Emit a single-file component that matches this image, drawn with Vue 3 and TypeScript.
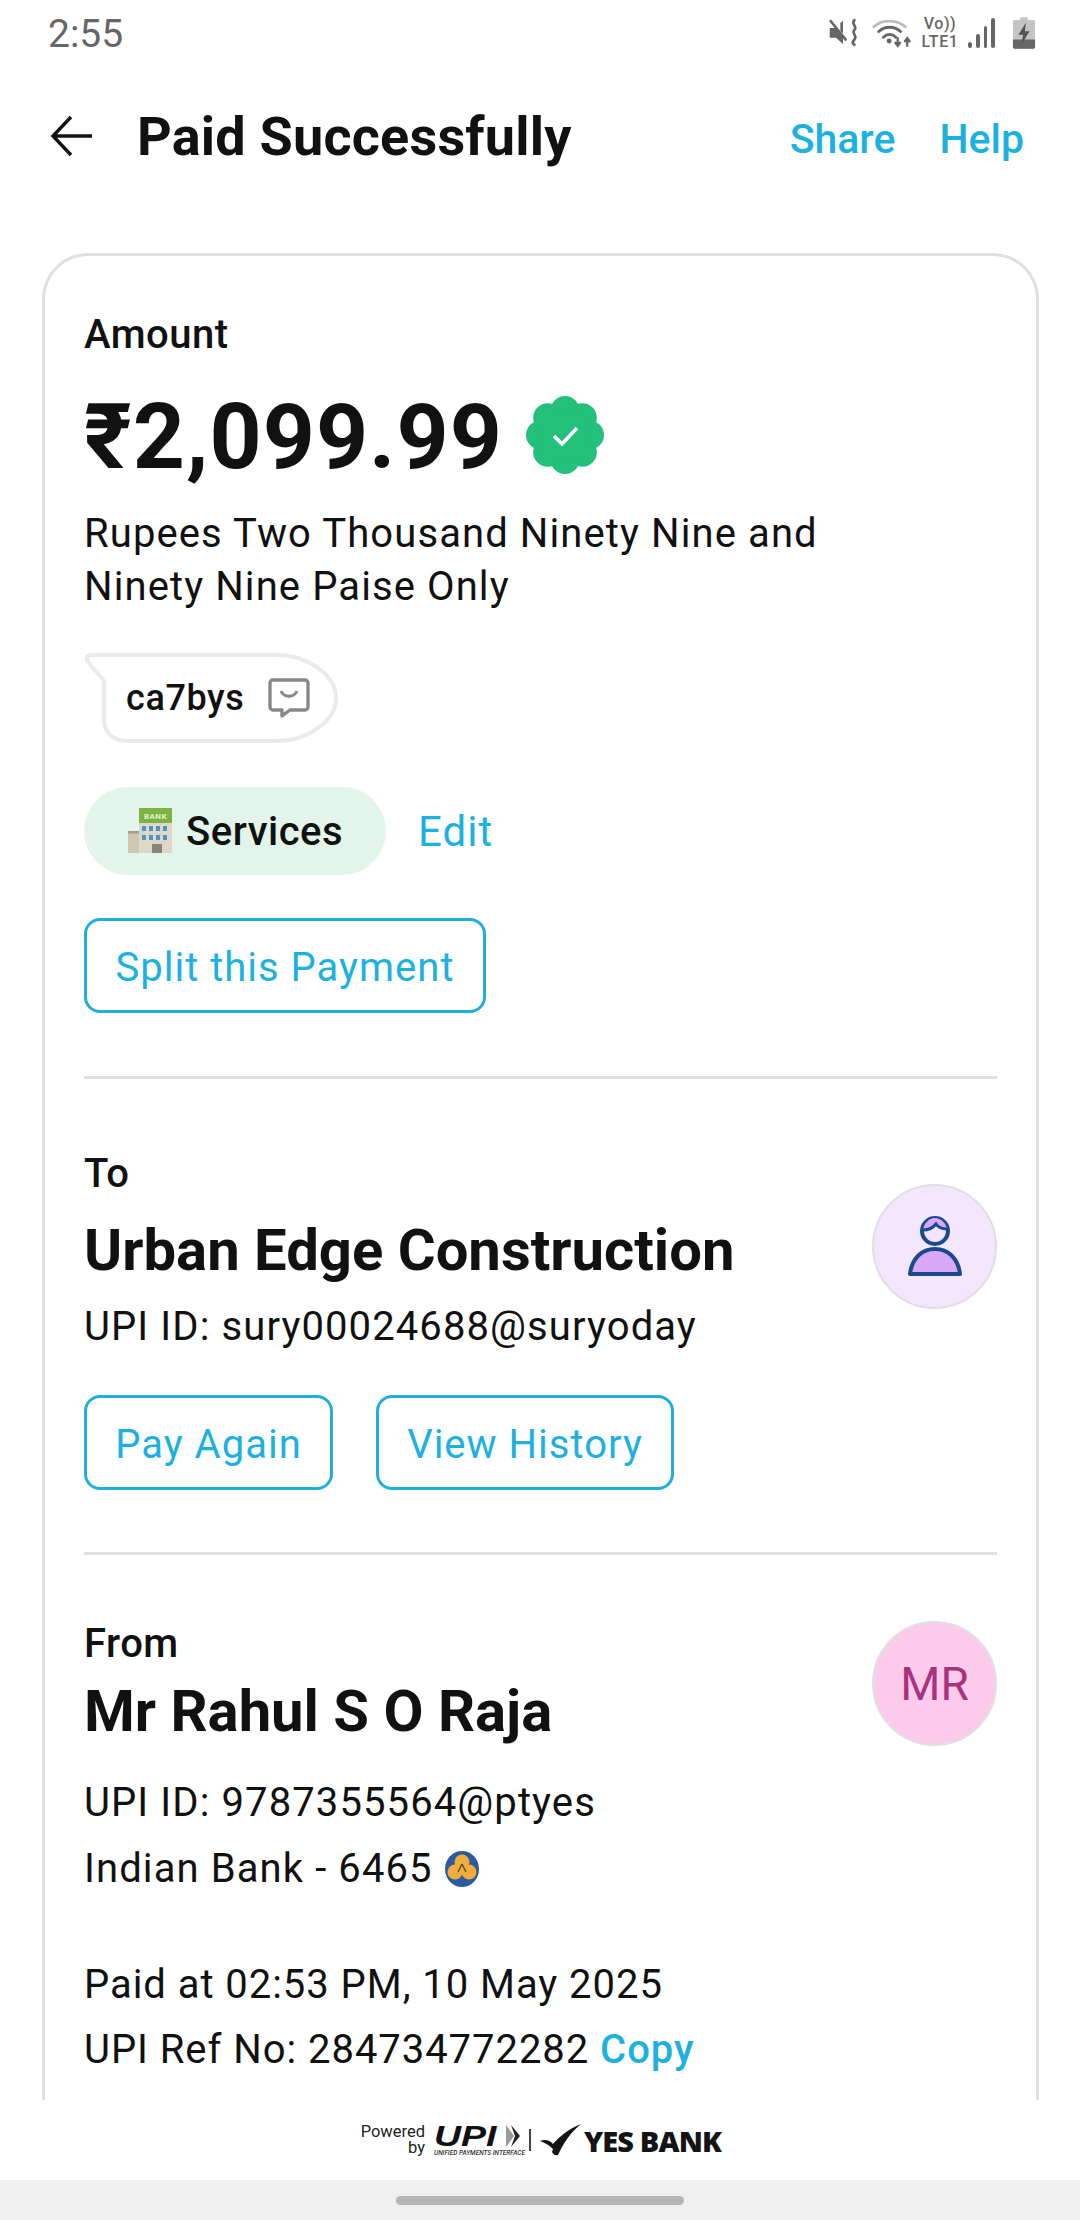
<template>
  <div class="screen">
    <!-- Status bar -->
    <div class="status-bar">
      <span class="clock">2:55</span>
      <div class="status-icons">
        <svg class="ic-vibrate" viewBox="0 0 34 32" width="30" height="31">
          <path d="M2 11h6l2 1 7 8v9l-8-7H2z" fill="#666" />
          <path d="M14 5v9l3 3V3z" fill="#666" />
          <path d="M3 3l17 21" stroke="#666" stroke-width="3" stroke-linecap="round" />
          <path d="M30 2c-5 4 4 7 0 11s4 7 0 11-1 5 0 6" fill="none" stroke="#666" stroke-width="3" stroke-linecap="round" />
        </svg>
        <svg class="ic-wifi" viewBox="0 0 42 32" width="40" height="31">
          <path d="M2 10C10 2 26 2 35 10" fill="none" stroke="#bbb" stroke-width="3" stroke-linecap="round" />
          <path d="M7 15c6-6 17-6 23 0M12 21c4-4 9-4 13 0" fill="none" stroke="#666" stroke-width="3" stroke-linecap="round" />
          <circle cx="18" cy="25" r="2.6" fill="#666" />
          <path d="M27 21v8m-3-3 3 4 3-4M37 31v-9m-3 4 3-4 3 4" fill="none" stroke="#666" stroke-width="2.4" />
        </svg>
        <div class="ic-lte">
          <span>Vo))</span>
          <span>LTE1</span>
        </div>
        <div class="signal">
          <i v-for="h in signalBars" :key="h" :style="{ height: h + 'px' }" />
        </div>
        <svg class="ic-battery" viewBox="0 0 26 34" width="24" height="32">
          <path d="M9 0h8v3h6a2 2 0 0 1 2 2v27a2 2 0 0 1-2 2H3a2 2 0 0 1-2-2V5a2 2 0 0 1 2-2h6z" fill="#c4c4c4" />
          <path d="M1 24h24v8a2 2 0 0 1-2 2H3a2 2 0 0 1-2-2z" fill="#666" />
          <path d="M15 6 7 19h5l-2 11 9-15h-5z" fill="#555" />
        </svg>
      </div>
    </div>

    <!-- Header -->
    <header class="top-bar">
      <svg class="back" viewBox="0 0 44 44" width="44" height="44">
        <path d="M42 22H4M21 3 3 22l18 19" fill="none" stroke="#111" stroke-width="3.4" />
      </svg>
      <h1 class="title">Paid Successfully</h1>
      <a class="top-link share">Share</a>
      <a class="top-link">Help</a>
    </header>

    <main class="content">
      <section class="card">
        <div class="block">
          <div class="label amount-label">Amount</div>
          <div class="amount-row">
            <span class="amount">₹2,099.99</span>
            <svg class="badge" viewBox="0 0 78 78" width="78" height="78">
              <circle v-for="p in scallops" :key="p.x" :cx="p.x" :cy="p.y" r="14.5" fill="#22c07a" />
              <circle cx="39" cy="39" r="26" fill="#22c07a" />
              <path d="M28 40l8 8 15-16" fill="none" stroke="#fff" stroke-width="3.6" />
            </svg>
          </div>
          <p class="words">Rupees Two Thousand Ninety Nine and<br />Ninety Nine Paise Only</p>

          <div class="note">
            <svg class="note-bg" viewBox="0 0 254 90" width="254" height="90">
              <path d="M8 2h184c32 0 60 20 60 43s-28 43-60 43H44c-15 0-24-8-24-22V28L4 9C1 5 3 2 8 2z" fill="#fff" stroke="#eaeaea" stroke-width="4" />
            </svg>
            <span class="note-text">ca7bys</span>
            <svg viewBox="0 0 42 40" width="42" height="40">
              <path d="M5 2h32a3 3 0 0 1 3 3v24a3 3 0 0 1-3 3H22l-8 6v-6H5a3 3 0 0 1-3-3V5a3 3 0 0 1 3-3z" fill="none" stroke="#888" stroke-width="3.4" stroke-linejoin="round" />
              <path d="M13 13c3 7 13 7 16 0" fill="none" stroke="#888" stroke-width="3" />
            </svg>
          </div>

          <div class="category-row">
            <div class="category">
              <svg viewBox="0 0 44 46" width="44" height="46">
                <rect x="0" y="25" width="14" height="20" fill="#cfc7b4" />
                <rect x="0" y="23" width="14" height="2.5" fill="#a89f8a" />
                <rect x="11" y="14" width="33" height="31" fill="#dcd7c8" />
                <rect x="11" y="0" width="33" height="15" fill="#7cb342" />
                <text x="27.5" y="11" class="bank-sign">BANK</text>
                <rect v-for="w in bankWindows" :key="w.x + '-' + w.y" :x="w.x" :y="w.y" width="4" height="5" fill="#4d93c4" />
                <rect x="24" y="36" width="10" height="9" fill="#8a8577" />
              </svg>
              <span>Services</span>
            </div>
            <a class="edit">Edit</a>
          </div>

          <button class="outline-btn split">Split this Payment</button>
        </div>

        <div class="block to">
          <div class="party">
            <div class="party-text">
              <div class="label">To</div>
              <div class="party-name">Urban Edge Construction</div>
              <div class="info">UPI ID: sury00024688@suryoday</div>
            </div>
            <div class="avatar avatar-user">
              <svg viewBox="0 0 60 62" width="60" height="62">
                <path d="M5 58C7 42 17 33 30 33s23 9 25 25z" fill="#d9a8f7" stroke="#1a4a8c" stroke-width="4" stroke-linejoin="round" />
                <circle cx="30" cy="15" r="13" fill="#f3e5fd" stroke="#1a4a8c" stroke-width="4" />
                <path d="M18 14c6 0 10-2 13-6 2 3 5 5 11 5-1-6-6-11-12-11S19 7 18 14z" fill="#d9a8f7" />
                <path d="M18 14c6 0 10-2 13-6 2 3 5 5 11 5" fill="none" stroke="#1a4a8c" stroke-width="3" />
              </svg>
            </div>
          </div>
          <div class="btn-row">
            <button class="outline-btn again">Pay Again</button>
            <button class="outline-btn history">View History</button>
          </div>
        </div>

        <div class="block from">
          <div class="party">
            <div class="party-text">
              <div class="label from-label">From</div>
              <div class="party-name">Mr Rahul S O Raja</div>
            </div>
            <div class="avatar avatar-initials">MR</div>
          </div>
          <div class="info from-upi">UPI ID: 9787355564@ptyes</div>
          <div class="info bank-line">
            <span>Indian Bank - 6465</span>
            <svg viewBox="0 0 34 36" width="34" height="36">
              <ellipse cx="17" cy="18" rx="17" ry="18" fill="#2c5aa0" />
              <circle cx="17" cy="11" r="7.5" fill="#f2ac3c" />
              <circle cx="10" cy="21" r="7.5" fill="#f2ac3c" />
              <circle cx="24" cy="21" r="7.5" fill="#f2ac3c" />
              <path d="M17 13l-4 8M17 13l4 8" stroke="#5b4a2a" stroke-width="1.4" />
            </svg>
          </div>
          <div class="info tight paid-at">Paid at 02:53 PM, 10 May 2025</div>
          <div class="info tight ref">UPI Ref No: 284734772282 <a class="copy">Copy</a></div>
        </div>
      </section>
    </main>

    <!-- Footer logos -->
    <footer class="powered">
      <div class="powered-by">Powered<br />by</div>
      <div class="upi-logo">
        <div class="upi-mark">
          <span class="upi-word">UPI</span>
          <svg viewBox="0 0 14 24" width="14" height="24">
            <path d="M0 1l8 11-8 11z" fill="#999" />
            <path d="M5 1l9 11-9 11 4-11z" fill="#222" />
          </svg>
        </div>
        <div class="upi-sub">UNIFIED PAYMENTS INTERFACE</div>
      </div>
      <i class="logo-sep" />
      <svg class="yes-check" viewBox="0 0 42 32" width="42" height="32">
        <path d="M0 17c5-2 10-1 13 3C20 12 30 4 41 0 30 9 23 20 18 31c-3 1-5-1-6-3l1-3c-4-4-8-6-13-8z" fill="#141414" />
      </svg>
      <span class="yes-word">YES BANK</span>
    </footer>

    <div class="nav-bar"><i class="nav-pill" /></div>
  </div>
</template>

<script setup lang="ts">
const signalBars = [6, 14, 22, 30]

// lobes of the verified badge
const scallops = Array.from({ length: 8 }, (_, i) => {
  const a = (i * Math.PI) / 4 - Math.PI / 2
  return { x: 39 + Math.cos(a) * 24.5, y: 39 + Math.sin(a) * 24.5 }
})

const bankWindows: { x: number; y: number }[] = []
for (const y of [18, 27]) {
  for (const x of [14, 21, 28, 35]) {
    bankWindows.push({ x, y })
  }
}
</script>

<style>
html,
body {
  margin: 0;
  background: #fff;
}
</style>

<style scoped>
.screen {
  width: 1080px;
  height: 2220px;
  display: flex;
  flex-direction: column;
  overflow: hidden;
  background: #fff;
  font-family: Roboto, "Noto Sans", sans-serif;
  color: #111;
}

/* Status bar */
.status-bar {
  height: 68px;
  flex: none;
  display: flex;
  align-items: center;
  justify-content: space-between;
  padding: 0 44px 0 48px;
  box-sizing: border-box;
}

.clock {
  font-size: 39px;
  color: #666;
}

.status-icons {
  display: flex;
  align-items: center;
  padding-bottom: 3px;
}

.ic-wifi {
  margin-left: 14px;
}

.ic-lte {
  display: flex;
  flex-direction: column;
  align-items: center;
  width: 38px;
  margin-left: 9px;
  font-size: 16px;
  line-height: 18px;
  font-weight: 500;
  letter-spacing: 0.6px;
  color: #666;
}

.signal {
  display: flex;
  align-items: flex-end;
  gap: 4px;
  height: 30px;
  width: 27px;
  margin: 0 17px 0 9px;
}

.signal i {
  width: 4px;
  background: #666;
  border-radius: 2px;
}

/* Header */
.top-bar {
  height: 136px;
  flex: none;
  box-sizing: border-box;
  display: flex;
  align-items: center;
  padding: 0 56px 0 50px;
}

.back {
  flex: none;
}

.title {
  margin: 0 0 0 43px;
  flex: 1;
  font-size: 54px;
  letter-spacing: 0.2px;
  font-weight: 700;
  color: #111;
}

.top-link {
  font-size: 41px;
  font-weight: 500;
  color: #1db1e2;
  margin-top: 6px;
}

.share {
  margin-right: 44px;
}

/* Card */
.content {
  flex: 1;
  min-height: 0;
  overflow: hidden;
  padding: 49px 41px 0 42px;
}

.card {
  border: 3px solid #e0e0e0;
  border-bottom: none;
  border-radius: 46px 46px 0 0;
  padding: 0 39px;
  min-height: 100%;
  box-sizing: border-box;
}

.block {
  border-bottom: 3px solid #e0e0e0;
}

.block.from {
  border-bottom: none;
}

.label {
  font-size: 40px;
  line-height: 46px;
  font-weight: 500;
  letter-spacing: 0.5px;
  color: #111;
}

.amount-label {
  padding-top: 56px;
}

.amount-row {
  display: flex;
  align-items: center;
  gap: 23px;
  margin-top: 27px;
  height: 100px;
}

.amount {
  margin-top: 4px;
  font-size: 91px;
  font-weight: 700;
  color: #111;
  letter-spacing: 1px;
}

.words {
  margin: 22px 0 0;
  font-size: 40px;
  line-height: 53px;
  letter-spacing: 1.1px;
  color: #111;
}

.note {
  position: relative;
  width: 254px;
  height: 90px;
  box-sizing: border-box;
  margin-top: 40px;
  display: flex;
  align-items: center;
  gap: 24px;
  padding-left: 42px;
}

.note-bg {
  position: absolute;
  top: 0;
  left: 0;
}

.note-text {
  position: relative;
  font-size: 36px;
  font-weight: 500;
  letter-spacing: 0.6px;
}

.note svg:last-child {
  position: relative;
}

.category-row {
  display: flex;
  align-items: center;
  gap: 32px;
  margin-top: 44px;
}

.category {
  height: 88px;
  width: 302px;
  box-sizing: border-box;
  display: flex;
  align-items: center;
  gap: 14px;
  padding-left: 44px;
  border-radius: 44px;
  background: #e3f4ea;
  font-size: 40px;
  font-weight: 500;
  letter-spacing: 0.5px;
}

.bank-sign {
  font-size: 8px;
  font-weight: 700;
  fill: #e4f2d0;
  text-anchor: middle;
  font-family: Roboto, sans-serif;
}

.edit {
  font-size: 42px;
  letter-spacing: 1px;
  color: #1db1e2;
}

.outline-btn {
  display: block;
  height: 95px;
  box-sizing: border-box;
  padding: 3px 0 0;
  border: 3px solid #20aedd;
  border-radius: 16px;
  background: #fff;
  font-family: inherit;
  font-size: 40px;
  letter-spacing: 1px;
  color: #1db1e2;
}

.split {
  width: 402px;
  margin: 43px 0 63px;
}

/* To / From */
.party {
  display: flex;
  justify-content: space-between;
}

.to .party {
  padding-top: 72px;
}

.party-name {
  font-size: 58px;
  line-height: 66px;
  font-weight: 700;
  color: #111;
  margin-top: 20px;
}

.info {
  font-size: 40px;
  line-height: 46px;
  letter-spacing: 1.1px;
  color: #111;
}

.info.tight {
  letter-spacing: 0.95px;
}

.to .info {
  margin-top: 21px;
}

.avatar {
  width: 125px;
  height: 125px;
  box-sizing: border-box;
  border: 2px solid #e2dfe4;
  border-radius: 50%;
  display: flex;
  align-items: center;
  justify-content: center;
  flex: none;
}

.avatar-user {
  background: #f3e6fd;
  margin-top: 33px;
}

.avatar-initials {
  background: #fccbeb;
  color: #a8327f;
  font-size: 46px;
}

.btn-row {
  display: flex;
  gap: 43px;
  margin: 45px 0 62px;
}

.again {
  width: 249px;
}

.history {
  width: 298px;
}

.from {
  padding-top: 66px;
}

.from .party-name {
  margin-top: 11px;
}

.from-upi {
  margin-top: 34px;
}

.bank-line {
  display: flex;
  align-items: center;
  gap: 12px;
  margin-top: 20px;
}

.paid-at {
  margin-top: 70px;
}

.ref {
  margin-top: 19px;
}

.copy {
  font-weight: 500;
  color: #1db1e2;
}

/* Footer */
.powered {
  height: 80px;
  flex: none;
  background: #fff;
  display: flex;
  align-items: center;
  padding-left: 355px;
  box-sizing: border-box;
}

.powered-by {
  font-size: 16.5px;
  line-height: 16px;
  text-align: right;
  color: #222;
  width: 70px;
}

.upi-logo {
  margin-left: 9px;
  width: 88px;
}

.upi-mark {
  display: flex;
  align-items: center;
  height: 26px;
}

.upi-word {
  width: 72px;
  font-family: "Liberation Sans", sans-serif;
  font-size: 30px;
  line-height: 26px;
  font-style: italic;
  font-weight: 700;
  transform: scaleX(1.25);
  transform-origin: left center;
  color: #111;
}

.upi-sub {
  font-size: 6.5px;
  line-height: 8px;
  font-style: italic;
  font-weight: 500;
  white-space: nowrap;
  color: #333;
}

.logo-sep {
  width: 2px;
  height: 22px;
  background: #444;
  margin: 0 9px 0 7px;
}

.yes-check {
  flex: none;
}

.yes-word {
  font-family: "Open Sans", sans-serif;
  font-size: 29px;
  font-weight: 800;
  letter-spacing: -0.9px;
  color: #141414;
  margin-left: 2px;
}

.nav-bar {
  height: 40px;
  flex: none;
  background: #f0f0f0;
  display: flex;
  justify-content: center;
  align-items: center;
}

.nav-pill {
  width: 288px;
  height: 9px;
  border-radius: 5px;
  background: #b5b5b5;
}
</style>
